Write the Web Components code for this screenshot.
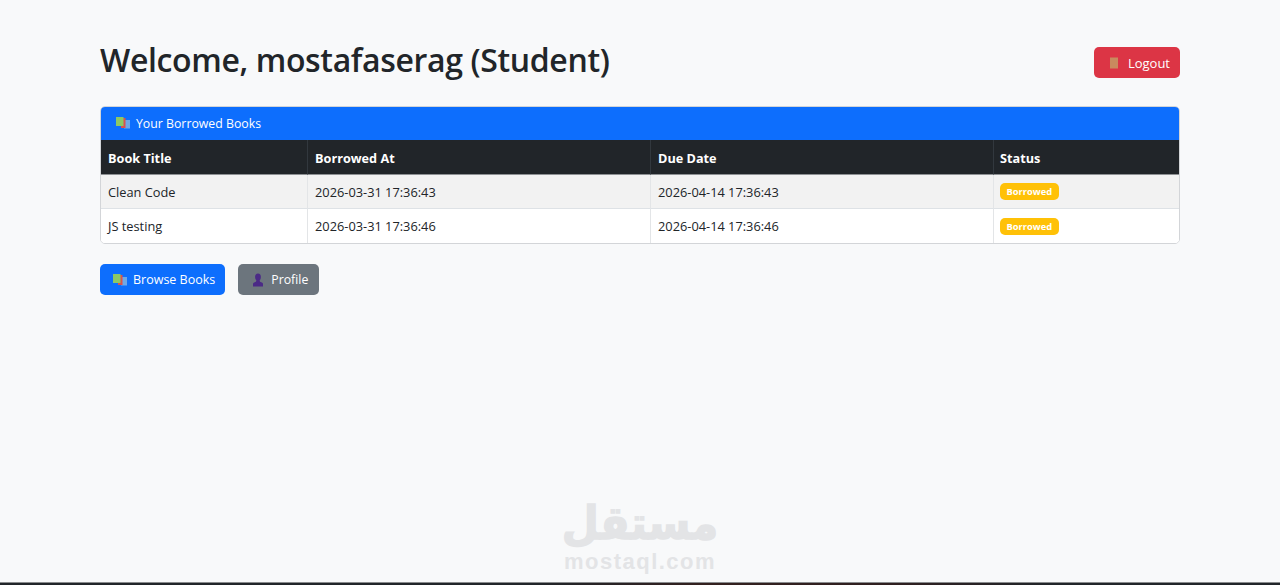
<!DOCTYPE html>
<html><head><meta charset="utf-8"><style>
html,body{margin:0;padding:0;background:#f8f9fa;height:585px;overflow:hidden}
body{font-family:"Open Sans","Noto Sans",sans-serif;color:#212529}
</style></head><body>
<app-page>
  <page-head slot="head" title="Welcome, mostafaserag (Student)"><app-btn color="#dc3545" icon="door">Logout</app-btn></page-head>
  <book-card slot="card" title="Your Borrowed Books">
    <book-row head a="Book Title" b="Borrowed At" c="Due Date" d="Status"></book-row>
    <book-row odd a="Clean Code" b="2026-03-31 17:36:43" c="2026-04-14 17:36:43" d="Borrowed"></book-row>
    <book-row last a="JS testing" b="2026-03-31 17:36:46" c="2026-04-14 17:36:46" d="Borrowed"></book-row>
  </book-card>
  <app-btn slot="actions" color="#0d6efd" icon="books">Browse Books</app-btn>
  <app-btn slot="actions" color="#6c757d" icon="person">Profile</app-btn>
  <water-mark slot="mark"></water-mark>
</app-page>
<script>
const ICONS={
 books:'<svg width="14" height="14" viewBox="0 0 14 14"><rect x="8" y="4" width="6" height="8.500" fill="#6ea8e8"/><rect x="5" y="2" width="4.500" height="10" fill="#d9534f"/><rect x="0" y="1" width="7.500" height="9" fill="#8cc864"/></svg>',
 person:'<svg width="14" height="14" viewBox="0 0 14 14"><ellipse cx="7" cy="4" rx="2.900" ry="3.600" fill="#4b2a86"/><path d="M5.500 6.500h3l.5 2.200c2 .5 3 1.300 3 2.300v2.500H2V11c0-1 1-1.800 3-2.300z" fill="#4b2a86"/></svg>',
 door:'<svg width="14" height="14" viewBox="0 0 14 14"><rect x="3" y="1.500" width="8" height="11" fill="#c98a5e"/></svg>'
};
const def=(n,html,init)=>customElements.define(n,class extends HTMLElement{
 constructor(){super();this.attachShadow({mode:'open'}).innerHTML=html;}
 connectedCallback(){init&&init.call(this,this.shadowRoot)}
});
def('app-page',`<style>:host{display:block;height:585px;box-sizing:border-box;position:relative;padding:40px 100px 0}
.actions{display:flex;gap:13px;margin-top:20.500px}
.bar{position:absolute;left:0;right:0;bottom:0;background:linear-gradient(90deg,#212529 0,#212529 42%,#33201f 55%,#2f1f20 70%,#212529 82%);border-top:1px solid #8a8c8e;box-sizing:content-box;height:2px}</style>
<slot name="head"></slot><slot name="card"></slot><div class="actions"><slot name="actions"></slot></div><slot name="mark"></slot><div class="bar"></div>`);
def('page-head',`<style>:host{display:flex;justify-content:space-between;align-items:flex-start;height:40px;margin-bottom:25.500px}
h2{margin:0;font-size:32px;font-weight:600;line-height:40px;letter-spacing:-.36px}
::slotted(*){margin-top:7px}</style><h2></h2><slot></slot>`,function(r){r.querySelector('h2').textContent=this.getAttribute('title')});
def('app-btn',`<style>:host{display:inline-flex;align-items:center;height:31px;box-sizing:border-box;padding:0 10px 0 13px;border-radius:5px;color:#fff;font-size:12.500px;gap:6px;line-height:1}
:host([icon=door]){gap:7px;font-size:13px}
:host([icon=person]){font-size:12.300px;padding-right:11px}
.i{display:flex}.t{padding-top:2px}</style><span class="i"></span><span class="t"><slot></slot></span>`,function(r){this.style.background=this.getAttribute('color');r.querySelector('.i').innerHTML=ICONS[this.getAttribute('icon')]});
def('book-card',`<style>:host{display:block;border:1px solid #d3d5d8;border-radius:5px;overflow:hidden;background:#fff}
.h{height:34px;box-sizing:border-box;background:#0d6efd;color:#fff;font-size:12.300px;display:flex;align-items:center;gap:6px;padding-left:16px;margin:-1px -1px 0}
.t{padding-top:1px}
</style><div class="h"><span style="display:flex"></span><span class="t"></span></div><slot></slot>`,function(r){r.querySelector('.t').textContent=this.getAttribute('title');r.querySelector('span').innerHTML=ICONS.books});
def('book-row',`<style>:host{display:grid;grid-template-columns:207px 343px 343px 1fr;font-size:12.800px;height:34px;background:#fff;color:#212529}
:host([odd]){background:#f2f2f2}
:host([head]){background:#212529;color:#fff;font-weight:700;font-size:12.700px;height:35px;margin:0 -1px;grid-template-columns:208px 343px 343px 1fr}
div{display:flex;align-items:center;padding-left:7px;border-right:1px solid #e3e5e7;min-width:0;box-sizing:border-box}
:host([head]) div{border-right-color:#32383e;padding-top:2px}
:host([head]) .a{padding-left:8px}
:host([odd]) div{padding-top:1px}
.d{padding-left:6px}
div:last-child{border-right:0}
:host(:not([last])) div{border-bottom:1px solid #dee2e6}
:host([head]) div{border-bottom:1px solid #8e9194}
.b{background:#ffc107;color:#fff;font-size:9.300px;font-weight:700;border-radius:5px;height:17px;line-height:17px;padding:0 6.500px}
:host([last]) .b{margin-top:1px}
</style><div class="a"></div><div class="b2"></div><div class="c"></div><div class="d"></div>`,function(r){
 for(const k of 'abc')r.querySelector(k==='b'?'.b2':'.'+k).textContent=this.getAttribute(k);
 const d=r.querySelector('.d'),v=this.getAttribute('d');
 if(this.hasAttribute('head'))d.textContent=v;else{const s=document.createElement('span');s.className='b';s.textContent=v;d.append(s)}
});
def('water-mark',`<style>:host{position:absolute;left:540px;top:498px;width:200px;text-align:center;color:#e3e4e6;line-height:1}
.ar{font:700 46px/50px "DejaVu Sans",sans-serif;transform:scaleX(.93);-webkit-text-stroke:1.500px #e3e4e6}
.en{font:700 22px/24px "Liberation Sans",sans-serif;letter-spacing:1.500px;margin-top:2px}</style><div class="ar" dir="rtl">مستقل</div><div class="en">mostaql.com</div>`);
</script></body></html>
